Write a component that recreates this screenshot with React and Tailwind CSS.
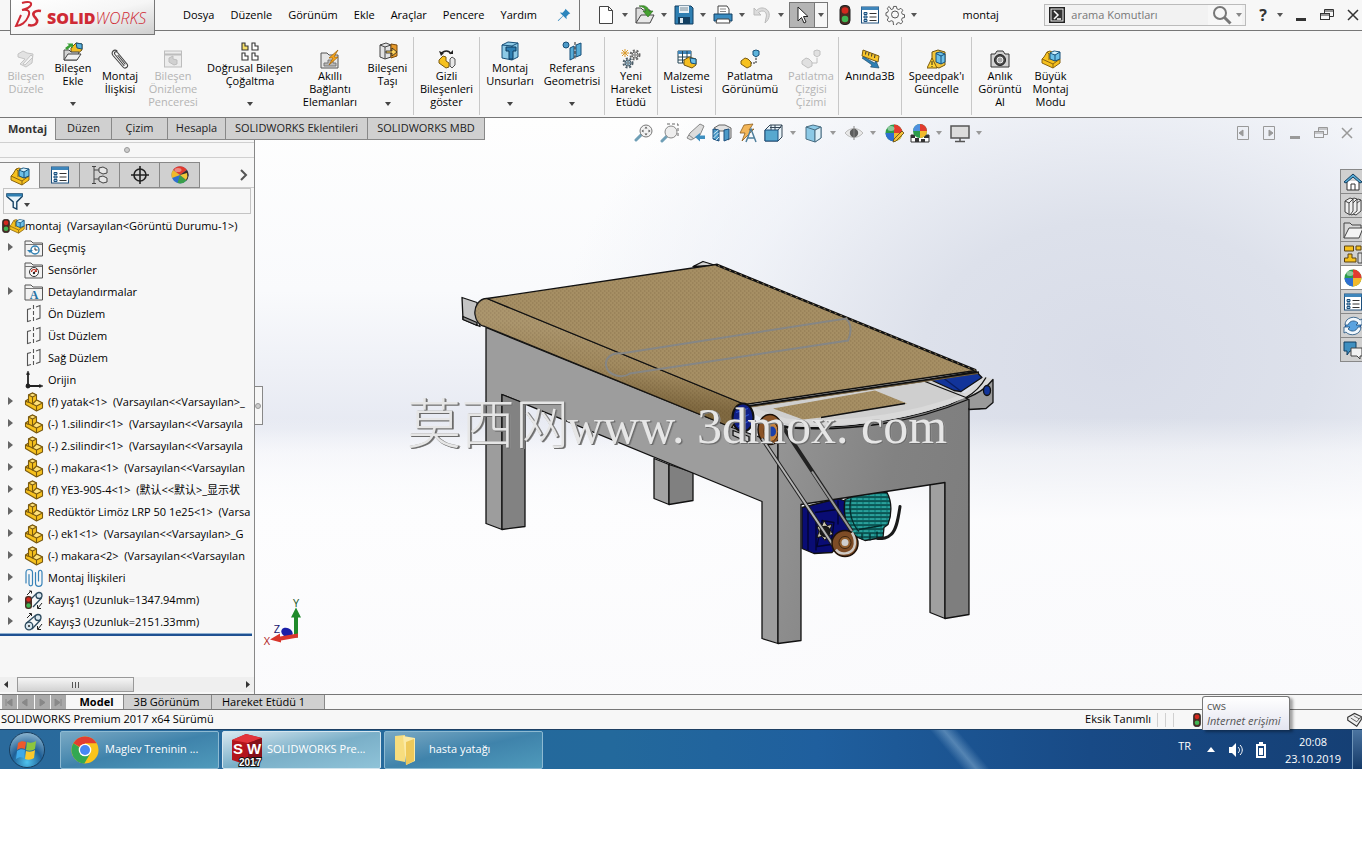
import { useState } from 'react';

/* ---------- shared drawing helpers ---------- */

function Glyph({ size = 20, children, className = '' }) {
  return (
    <svg
      width={size}
      height={size}
      viewBox="0 0 20 20"
      fill="none"
      className={`shrink-0 ${className}`}
      aria-hidden="true"
    >
      {children}
    </svg>
  );
}

function Caret({ className = 'text-[#555]' }) {
  return (
    <svg width="6" height="4" viewBox="0 0 6 4" className={`shrink-0 ${className}`} aria-hidden="true">
      <path d="M0 0h6L3 4z" fill="currentColor" />
    </svg>
  );
}

/* Yellow L-shaped part */
const Part = () => (
  <g stroke="#7a5a10" strokeWidth="1.100" strokeLinejoin="round">
    <path d="M1.500 9l3-2V3l4-2 4 2v5l6 3v5l-6 3-11-6.500z" fill="#f6c11e" />
    <path d="M4.500 3l4 2 4-2-4-2z" fill="#ffe27a" />
    <path d="M12.500 8l6 3-6 3-4-2z" fill="#ffe27a" />
    <path d="M8.500 5v7l-4-2V7M1.500 9l3 1.500M12.500 14v5" fill="none" />
  </g>
);

/* Part with a blue cube standing on it */
const Assembly = () => (
  <g strokeLinejoin="round">
    <path d="M1 10l2-2 3-5 3-1 2 1v7h8v4l-7 5-11-5z" fill="#f6c11e" stroke="#8a6410" />
    <path d="M1 10l11 5 7-5M12 15v4M6 3l2 2v6" stroke="#8a6410" />
    <path d="M9 4l4-2 6 1v7l-5 2-5-2z" fill="#6cc0e8" stroke="#174f78" />
    <path d="M9 4l5 2 5-3M14 6v6" stroke="#174f78" />
    <path d="M10 4l3.500-1.500 4 .7-3.500 2z" fill="#d9f1fb" />
  </g>
);

const Balloon = () => (
  <g>
    <circle cx="10" cy="10" r="8.500" fill="#2c9c4b" />
    <path d="M10 10V1.500A8.500 8.500 0 0 1 18.500 10z" fill="#e23b2e" />
    <path d="M10 10h8.500A8.500 8.500 0 0 1 10 18.500z" fill="#f1b92b" />
    <path d="M10 10v8.500A8.500 8.500 0 0 1 1.500 10z" fill="#2e6fd1" />
    <ellipse cx="7" cy="5.500" rx="3.500" ry="2.500" fill="#fff" opacity=".45" />
  </g>
);

/* Sphere used on the manager tab, split on a slant */
const Sphere = () => (
  <g>
    <circle cx="10" cy="10" r="8.500" fill="#2e6fd1" />
    <path d="M10 10L3 5a8.500 8.500 0 0 1 14 0z" fill="#e23b2e" />
    <path d="M10 10l7-5a8.500 8.500 0 0 1-1 11z" fill="#3a2a2a" />
    <path d="M10 10l6.500 5.500a8.500 8.500 0 0 1-9 2.500z" fill="#3a9f4a" />
    <path d="M10 10L3 5a8.500 8.500 0 0 0-1 8z" fill="#f1b92b" />
    <path d="M10 10l7-2a8 8 0 0 1-1 7z" fill="#f1c93b" />
    <ellipse cx="8" cy="5" rx="3.500" ry="2" fill="#fff" opacity=".4" />
  </g>
);

const List = () => (
  <g>
    <rect x="1.500" y="2" width="17" height="16" fill="#fff" stroke="#1d4f7c" />
    <rect x="1.500" y="2" width="17" height="3" fill="#3f86bb" />
    <path d="M4 7.500h3v2H4zM4 11h3v2H4zM4 14.500h3v2H4z" fill="#9fd0ea" stroke="#1d4f7c" />
    <path d="M9.500 8.500h7M9.500 12h7M9.500 15.500h7" stroke="#333" />
  </g>
);

const Light = () => (
  <g>
    <rect x="5" y="0.500" width="10" height="19" rx="4" fill="#4a2c22" stroke="#222" />
    <circle cx="10" cy="5.500" r="3.300" fill="#d4281e" />
    <circle cx="10" cy="14" r="3.300" fill="#3fb552" />
  </g>
);

const Gear = ({ x = 10, y = 10, r = 5, c = '#555', f = '#e9e9e9' }) => (
  <g stroke={c}>
    <circle cx={x} cy={y} r={r + 1.500} strokeWidth="2" strokeDasharray="2 1.700" />
    <circle cx={x} cy={y} r={r} fill={f} />
    <circle cx={x} cy={y} r={r / 2.500} fill="#fff" />
  </g>
);

const icons = {
  pin: <path d="M12 1l7 7-2 .6-3.500 3.500.3 4L9 11.500 2 18.500l-1-.5L8.500 11 4 6.500l4 .4L11.500 3z" fill="#2d86bd" />,
  newDoc: <path d="M3.500 1.500h9l4 4v13h-13zM12.500 1.500v4h4" fill="#fff" stroke="#444" />,
  open: (
    <g>
      <path d="M1 18V3h5l2 2h7v4" fill="#ddd" stroke="#444" />
      <path d="M1 18l5-8h13l-4 8z" fill="#e8e8e8" stroke="#444" />
      <path d="M4 1c5-1 9 0 10 5h4l-5 6-5-6h3c-1-3-3-4-7-5z" fill="#44a02f" stroke="#2a6c1c" strokeWidth=".6" />
    </g>
  ),
  save: (
    <g>
      <path d="M1 1h16l2 2v16H1z" fill="#2f7fb2" stroke="#123f61" />
      <path d="M5 1h10v7H5z" fill="#e9f1f6" />
      <path d="M6 3h8M6 5h8" stroke="#7b8d98" />
      <path d="M4 12h12v7H4z" fill="#123f61" />
      <path d="M6 13h3v5H6z" fill="#dce8ef" />
    </g>
  ),
  print: (
    <g>
      <path d="M5 1h9l2 3v6H5z" fill="#fff" stroke="#444" />
      <path d="M1 9h18v7H1z" fill="#3a8cc0" stroke="#123f61" />
      <path d="M4 14h12l1 4H3z" fill="#fff" stroke="#444" />
      <path d="M7 4h6M7 6.500h6" stroke="#888" />
    </g>
  ),
  undo: <path d="M2 3v7h7L6.500 7.500C11 4 16 7 14 13l-1 5c5-4 6-11 1-14-4-2-7-1-9.500 1.500z" fill="#dcdcdc" stroke="#bbb" />,
  pointer: <path d="M6 2v14l3.500-3.500L12 18l2-1-2.500-5.500H16z" fill="#fff" stroke="#222" />,
  light: <Light />,
  list: <List />,
  gear: (
    <g stroke="#555" fill="#f8f8f8">
      <path
        d="M8.500 1.500h3l.5 2.500 2 .8 2.200-1.300 2 2-1.300 2.200.8 2 2.300.5v3l-2.300.4-.8 2 1.300 2.200-2 2-2.200-1.300-2 .8-.5 2.200h-3L8 17.300l-2-.8-2.200 1.300-2-2 1.300-2.200-.8-2L0.500 11.200v-3l1.800-.5.8-2-1.300-2.200 2-2L6 4.800l2-.8z"
        transform="translate(.5 0) scale(.95)"
      />
      <circle cx="10" cy="9.500" r="3.500" />
    </g>
  ),
  editPart: (
    <g stroke="#c4c4c4" fill="#e2e2e2">
      <path d="M2 5l5-3 4 2 6 1-1 9-6 4-6-3 5-5-7-2z" />
      <path d="M7 15l8-9 2 2-8 8z" fill="#f4f4f4" />
    </g>
  ),
  insertPart: (
    <g>
      <path d="M8 7l5-5 6 1v6l-5 4-6-2z" fill="#f2bd24" stroke="#6f5410" />
      <path d="M13 2l6 1v5l-5-1z" fill="#5db4dd" stroke="#174f78" />
      <path d="M1 19V9h5l2 2h8l-2 8z" fill="#d4d4d4" stroke="#444" />
      <path d="M1 19l4-6h13l-4 6z" fill="#f0f0f0" stroke="#444" />
      <path d="M2 7l4-3-2-1.500h6V7L8 5.500 4 9z" fill="#3a9f35" />
    </g>
  ),
  clip: (
    <path
      d="M14 16.500L5 5.500C3.500 3.500 6 1.500 7.500 3.500L17 15c2 3-2 5.500-4 3L3 6.500C0.500 3 4.500-.5 7 2M8 6.500l7 8.500"
      stroke="#444"
      strokeWidth="1.100"
      strokeLinecap="round"
    />
  ),
  preview: (
    <g stroke="#bdbdbd">
      <rect x="1.500" y="2" width="17" height="16" fill="#ececec" />
      <path d="M1.500 5.500h17" strokeWidth="2" />
      <path d="M6 9l4-2v3l4 1v4l-3 1-5-3z" fill="#d0d0d0" />
    </g>
  ),
  pattern: (
    <g stroke="#333" strokeWidth="1.100">
      <path d="M2 2h3v3h3v4H2z" fill="#f6df6a" />
      <path d="M12 2h3v3h3v4h-6zM2 12h3v3h3v4H2zM12 12h3v3h3v4h-6z" fill="#fff" />
    </g>
  ),
  smart: (
    <g>
      <path d="M1 19V4h6l2 2h9v13z" fill="#e6e6e6" stroke="#555" />
      <path d="M4 14h4v-3h5v3h3v3H4z" fill="#b9b9b9" stroke="#777" />
      <path d="M18 1l-9 8h4l-4 7 9-8h-4z" fill="#f7a71c" stroke="#9e5f06" strokeWidth=".7" />
    </g>
  ),
  move: (
    <g>
      <path d="M2 4l6-2 5 2v12l-6 2-5-2z" fill="#e2e2e2" stroke="#444" />
      <path d="M2 4l5 2v12M7 6l6-2" stroke="#444" />
      <path d="M13 3l6 1v11l-6 2z" fill="#e79a2a" stroke="#7a4a0c" />
      <path d="M8 10h6V7l5 4-5 4v-3H8z" fill="#ffd25b" stroke="#222" strokeWidth=".8" />
    </g>
  ),
  hidden: (
    <g>
      <path d="M4 5c3-4 8-4 10 0" stroke="#222" strokeWidth="1.300" />
      <path d="M12 5h4V1zM2 2l2 5 3-3z" fill="#222" />
      <path d="M2 11l4-4 3 1v4l3 2v4l-3 1-7-5z" fill="#f6c11e" stroke="#7a5a10" />
      <path d="M13 10l2-2 3 2v6l-3 3-2-2z" fill="#e8e8e8" stroke="#555" />
    </g>
  ),
  features: (
    <g>
      <path d="M2 4l6-3 10 1v14l-6 3-10-2z" fill="#8cc9e6" stroke="#174f78" />
      <path d="M2 4l10 1v14M12 5l6-3" stroke="#174f78" />
      <path d="M6 6h10v4h-3v8H9v-8H6z" fill="#2f7fb2" stroke="#0d3c60" />
    </g>
  ),
  refGeom: (
    <g>
      <circle cx="4" cy="4" r="3" fill="#4c9ac8" stroke="#174f78" />
      <path d="M8 7l4-2v12l-4 2zM14 4l5-2v12l-5 2z" fill="#58acd6" stroke="#174f78" />
      <path d="M13 1v18" stroke="#222" strokeDasharray="3 1.500" />
    </g>
  ),
  motion: (
    <g>
      <path d="M4 0v8M0 4h8M1 1l6 6M7 1L1 7" stroke="#d9992a" />
      <Gear x={14} y={6} r={3} c="#666" />
      <Gear x={7} y={14} r={3} c="#4c5d68" f="#9ec3d6" />
    </g>
  ),
  bom: (
    <g>
      <path d="M1 2h13v12H1z" fill="#fff" stroke="#245" />
      <path d="M1 2h13v3H1z" fill="#3f86bb" />
      <path d="M1 8h13M1 11h13M5.500 2v12M10 2v12" stroke="#245" />
      <path d="M7 11l5-3 7 2v6l-4 3-8-3z" fill="#f4bd20" stroke="#6f5410" />
      <path d="M13 9l6 1v5l-5-1z" fill="#6cc0e8" stroke="#174f78" />
    </g>
  ),
  explode: (
    <g>
      <path d="M1 12l4-3 3 1 3 3v4l-4 2-6-4z" fill="#f6c11e" stroke="#7a5a10" />
      <path d="M13 2l3-1 3 1v4l-3 2-3-2z" fill="#5db4dd" stroke="#174f78" />
      <path d="M16 9v5h-5" stroke="#222" strokeDasharray="2 1" />
    </g>
  ),
  explodeOff: (
    <g fill="#e0e0e0" stroke="#c0c0c0">
      <path d="M1 12l4-3 3 1 3 3v4l-4 2-6-4zM13 2l3-1 3 1v4l-3 2-3-2z" />
      <path d="M16 9v5h-5" fill="none" />
    </g>
  ),
  instant: (
    <g>
      <path d="M3 1l16 6-1 6L2 7z" fill="#f7c52b" stroke="#7a5a10" />
      <path d="M6 2.500l-.5 3M9 3.500l-.5 3M12 4.500l-.5 3M15 6l-.5 3" stroke="#333" />
      <path d="M2 9l10 7-1.500 2 8.500 1-3-7-1.500 2L4 8z" fill="#2f7fb2" stroke="#123f61" strokeWidth=".6" />
    </g>
  ),
  speedpak: (
    <g>
      <path d="M5 3l6-2 7 2v13l-6 3-7-2z" fill="#f4c63a" stroke="#6f5410" />
      <path d="M9 4l4-1 5 2v8l-4 2-5-2z" fill="#6cc0e8" stroke="#174f78" />
      <path d="M14 7v8M9 4.500l5 2.500 4-2" stroke="#174f78" />
      <path d="M5 9l5 10H0z" fill="#ffd534" stroke="#7a5a10" />
      <path d="M5 12v4M5 17v1" stroke="#222" />
    </g>
  ),
  camera: (
    <g>
      <path d="M1 5h4l2-3h6l2 3h4v13H1z" fill="#d2d2d2" stroke="#333" />
      <circle cx="10" cy="11" r="5.500" fill="#4a4a4a" stroke="#222" />
      <circle cx="10" cy="11" r="3" fill="#a8a8a8" stroke="#eee" />
    </g>
  ),
  assembly: <Assembly />,
  part: <Part />,
  balloon: <Balloon />,
  sphere: <Sphere />,
  tree: (
    <g stroke="#444" fill="#fff">
      <path d="M4 2v16M4 5h5M4 14h5" />
      <path d="M2 1.500h4M2 18.500h4" />
      <path d="M9 3l4-1 4 2v4l-4 1-4-2zM9 12l4-1 4 2v4l-4 1-4-2z" fill="#e6e6e6" />
    </g>
  ),
  target: (
    <g stroke="#222" strokeWidth="1.600">
      <circle cx="10" cy="10" r="6" />
      <path d="M10 1v18M1 10h18" />
    </g>
  ),
  folderHistory: (
    <g>
      <path d="M1 18V3h6l2 2h9.500v13z" fill="#f2f2f2" stroke="#555" />
      <path d="M1 6.500h17" stroke="#777" />
      <circle cx="11" cy="12" r="4" fill="#fff" stroke="#2f7fb2" strokeWidth="1.400" />
      <path d="M11 9.500V12h2.500" stroke="#333" />
      <path d="M3 12h6l-3 3z" fill="#2f7fb2" />
    </g>
  ),
  folderSensor: (
    <g>
      <path d="M1 18V3h6l2 2h9.500v13z" fill="#f2f2f2" stroke="#555" />
      <path d="M1 6.500h17" stroke="#777" />
      <circle cx="10" cy="12" r="4.500" fill="#fff" stroke="#333" />
      <path d="M7.500 12a2.500 2.500 0 0 1 5 0M10 13l3-4" stroke="#c0392b" strokeWidth="1.200" />
      <circle cx="10" cy="13" r="1.200" fill="#222" />
    </g>
  ),
  folderNotes: (
    <g>
      <path d="M1 18V3h6l2 2h9.500v13z" fill="#f2f2f2" stroke="#555" />
      <path d="M1 6.500h17" stroke="#777" />
      <text x="10" y="17" textAnchor="middle" fontSize="12" fontWeight="700" fontFamily="Liberation Serif, serif" fill="#2470a4">
        A
      </text>
    </g>
  ),
  plane: (
    <g stroke="#555" strokeWidth="1.100">
      <path d="M7 4.500L3.500 5.500v12L7 16.500M12 3l4-1.500v12.500L12 15.500" />
      <path d="M9.500 1v18" strokeDasharray="4 2" />
    </g>
  ),
  origin: (
    <g stroke="#222" strokeWidth="1.800" fill="#222">
      <path d="M4 3v13h13" fill="none" />
      <path d="M4 1L2.500 4.500h3zM19 16l-3.500-1.500v3z" strokeWidth=".6" />
      <circle cx="4" cy="16" r="1.500" />
    </g>
  ),
  mates: (
    <g stroke="#3682b8" strokeWidth="1.200" strokeLinecap="round">
      <path d="M2 15V4.500c0-4 6.500-4 6.500 0V16c0 2.500-3.500 2.500-3.500 0V6.500" />
      <path d="M11.500 4.500V15c0 4.500 6.500 4.500 6.500 0V4.500c0-3-3.500-3-3.500 0V13" />
    </g>
  ),
  belt: (
    <g>
      <circle cx="5" cy="14" r="3.800" fill="#d8e6ee" stroke="#2c4a5e" strokeWidth="1.300" />
      <circle cx="14" cy="5.500" r="3" fill="#d8e6ee" stroke="#2c4a5e" strokeWidth="1.300" />
      <path d="M2 11.500L12 3M8 17l8.500-9" stroke="#2c4a5e" strokeWidth="1.300" />
      <circle cx="5" cy="14" r="1" fill="#222" />
      <path d="M3 6l4-4M5 1.500h2.500V4M18 12l-4 5M13.500 14v3.500H17" stroke="#222" />
    </g>
  ),
  beltRebuild: (
    <g>
      <circle cx="15" cy="5.500" r="3" fill="#d8e6ee" stroke="#2c4a5e" strokeWidth="1.300" />
      <path d="M7 9l6-6M9 17l8.500-9" stroke="#2c4a5e" strokeWidth="1.300" />
      <path d="M3 5l4-4M5 1h2.500v2.500M18 13l-4 5M13.500 15v3.500H17" stroke="#222" />
      <rect x="1" y="6" width="7" height="13" rx="3" fill="#4a2c22" />
      <circle cx="4.500" cy="9.500" r="2.200" fill="#d4281e" />
      <circle cx="4.500" cy="15.500" r="2.200" fill="#3fb552" />
    </g>
  ),
  zoomFit: (
    <g>
      <path d="M7 12l-5 5" stroke="#6f9fb6" strokeWidth="3" strokeLinecap="round" />
      <circle cx="12" cy="8" r="6" fill="#f2f2f2" stroke="#777" />
      <path d="M12 3.500l1.500 2h-3zM12 12.500l1.500-2h-3zM7.500 8l2-1.500v3zM16.500 8l-2-1.500v3z" fill="#555" />
    </g>
  ),
  zoomArea: (
    <g>
      <path d="M7 1h11v12" stroke="#666" strokeDasharray="3 2" />
      <path d="M7 13l-5 5" stroke="#6f9fb6" strokeWidth="3" strokeLinecap="round" />
      <circle cx="11" cy="9" r="6" fill="#eee" stroke="#888" />
    </g>
  ),
  prevView: (
    <g>
      <path d="M14 1l4 2-4 9-9 5-4-2 3-5z" fill="#dcdcdc" stroke="#888" />
      <path d="M3 12l5 4" stroke="#888" />
      <path d="M9 14l5-4v2.500h5v3.500h-5v2.500z" fill="#3f8fc0" />
    </g>
  ),
  section: (
    <g>
      <path d="M2 5l5-3h6l6 3v10l-3 2V8H7z" fill="#e2e2e2" stroke="#666" />
      <path d="M1 6l6 1v11l-6-2z" fill="#4c9ac8" stroke="#1d4f7c" />
      <path d="M1.500 11l5-4M1.500 15l5-5M4 17l3-3" stroke="#d6ecf7" />
      <path d="M12 7l5-1v10l-5 2z" fill="#4c9ac8" stroke="#1d4f7c" />
    </g>
  ),
  annot: (
    <g>
      <path d="M6 2l9-1-4 6 5-1L4 18l3-8H2z" fill="#f3b659" stroke="#8b5c1c" strokeWidth=".8" />
      <path d="M8 19l5-13 5 13M10 15h7" stroke="#4f7f9c" strokeWidth="1.500" />
    </g>
  ),
  orient: (
    <g>
      <path d="M1 7l5-5h12v12l-4 4H1z" fill="#e9f4fa" stroke="#345" />
      <path d="M1 7h13v11H1z" fill="#57a8cf" stroke="#1d4f7c" />
      <path d="M14 7l4-5M7 2v5M11 2v5M6 4.500h11" stroke="#345" />
    </g>
  ),
  cube: (
    <g strokeLinejoin="round">
      <path d="M2 4l7-2 8 2v11l-6 4-9-3z" fill="#8cc9e6" stroke="#4a6f84" />
      <path d="M2 4l9 3 6-3M11 7v12" stroke="#4a6f84" />
      <path d="M11 7l6-3v11l-6 4z" fill="#dff0f8" stroke="#4a6f84" />
    </g>
  ),
  eye: (
    <g>
      <path d="M1 10c5-6 13-6 18 0-5 6-13 6-18 0z" fill="#e8e8e8" stroke="#bbb" />
      <circle cx="10" cy="10" r="4.200" fill="#5c5c5c" />
      <path d="M10 3v14" stroke="#888" />
    </g>
  ),
  appearance: (
    <g>
      <Balloon />
      <path d="M18 8l2 2-8 8-3 1 1-3z" fill="#f3c23c" stroke="#5b4212" strokeWidth=".8" />
    </g>
  ),
  scene: (
    <g>
      <path d="M1 12h18v7H1z" fill="#fff" stroke="#333" />
      <path d="M1 12h4v3H1zM5 15h4v4H5zM14 12h5v3h-5zM11 16h4v3h-4z" fill="#333" />
      <circle cx="10" cy="8" r="7" fill="#2c9c4b" />
      <path d="M10 8V1a7 7 0 0 1 7 7z" fill="#e23b2e" />
      <path d="M10 8h7a7 7 0 0 1-7 7z" fill="#f1b92b" />
      <path d="M10 8V1a7 7 0 0 0-7 7z" fill="#4d8fe0" />
    </g>
  ),
  monitor: (
    <g>
      <rect x="1" y="3" width="18" height="12" fill="#dcdcdc" stroke="#555" strokeWidth="1.500" />
      <path d="M10 15v3M5 18.500h10" stroke="#555" strokeWidth="1.500" />
    </g>
  ),
  home: (
    <g>
      <path d="M4 9v9h12V9" fill="#fff" stroke="#333" />
      <path d="M1 10l9-8 9 8-2 1-7-6-7 6z" fill="#58acd6" stroke="#123f61" />
      <path d="M8 18v-6h4v6" stroke="#333" />
    </g>
  ),
  library: (
    <g fill="#efefef" stroke="#444" strokeLinejoin="round">
      <path d="M10 6l5-3 3 1v11l-5 4-3-1z" />
      <path d="M6 5l5-3 3 1v12l-5 4-3-1z" />
      <path d="M2 5l5-3 3 1v12l-3 4-5-3z" />
      <path d="M2 5l4 2 4-4M6 7v11M10 7l4-4M14 7l4-3" fill="none" />
    </g>
  ),
  folder: (
    <g stroke="#444">
      <path d="M1 18V3h6l2 2h9v4" fill="#d8d8d8" />
      <path d="M1 18l5-10h14l-4 10z" fill="#f4f4f4" />
    </g>
  ),
  palette: (
    <g stroke="#5b4212" fill="#f6c11e">
      <path d="M1.500 2h9v5h-9zM13 2h5v4h-5zM5 10h4v4h4v4H1.500v-4H5z" />
      <path d="M15 9h4v10h-4z" fill="#ddd" stroke="#444" />
    </g>
  ),
  refresh: (
    <g>
      <circle cx="10" cy="10" r="7.500" fill="#5aa3e0" stroke="#1d4f9c" />
      <path d="M2 9c0-8 11-10 15-5l2-1v6h-6l2-2c-3-3-8-3-10 2zM18 11c0 8-11 10-15 5l-2 1v-6h6l-2 2c3 3 8 3 10-2z" fill="#f2f8fd" stroke="#1d4f7c" strokeWidth=".8" />
    </g>
  ),
  forum: (
    <g>
      <path d="M1 2h12v9H7l-3 4v-4H1z" fill="#3f8fc0" stroke="#123f61" />
      <path d="M8 8h11v8h-2v3l-3-3H8z" fill="#f2f2f2" stroke="#444" />
    </g>
  ),
};

/* ---------- data ---------- */

const menus = ['Dosya', 'Düzenle', 'Görünüm', 'Ekle', 'Araçlar', 'Pencere', 'Yardım'];

const ribbon = [
  { w: 'w-[48px]', icon: 'editPart', lines: ['Bileşen', 'Düzele'], off: true },
  { w: 'w-[46px]', icon: 'insertPart', lines: ['Bileşen', 'Ekle'], drop: true },
  { w: 'w-[48px]', icon: 'clip', lines: ['Montaj', 'İlişkisi'] },
  { w: 'w-[58px]', icon: 'preview', lines: ['Bileşen', 'Önizleme', 'Penceresi'], off: true },
  { w: 'w-[96px]', icon: 'pattern', lines: ['Doğrusal Bileşen', 'Çoğaltma'], drop: true },
  { w: 'w-[64px]', icon: 'smart', lines: ['Akıllı', 'Bağlantı', 'Elemanları'] },
  { w: 'w-[52px]', icon: 'move', lines: ['Bileşeni', 'Taşı'], drop: true, sep: true },
  { w: 'w-[66px]', icon: 'hidden', lines: ['Gizli', 'Bileşenleri', 'göster'], sep: true },
  { w: 'w-[60px]', icon: 'features', lines: ['Montaj', 'Unsurları'], drop: true },
  { w: 'w-[65px]', icon: 'refGeom', lines: ['Referans', 'Geometrisi'], drop: true, sep: true },
  { w: 'w-[53px]', icon: 'motion', lines: ['Yeni', 'Hareket', 'Etüdü'], sep: true },
  { w: 'w-[58px]', icon: 'bom', lines: ['Malzeme', 'Listesi'], sep: true },
  { w: 'w-[68px]', icon: 'explode', lines: ['Patlatma', 'Görünümü'] },
  { w: 'w-[55px]', icon: 'explodeOff', lines: ['Patlatma', 'Çizgisi', 'Çizimi'], off: true, sep: true },
  { w: 'w-[63px]', icon: 'instant', lines: ['Anında3B'], sep: true },
  { w: 'w-[70px]', icon: 'speedpak', lines: ["Speedpak'ı", 'Güncelle'], sep: true },
  { w: 'w-[56px]', icon: 'camera', lines: ['Anlık', 'Görüntü', 'Al'] },
  { w: 'w-[45px]', icon: 'assembly', lines: ['Büyük', 'Montaj', 'Modu'] },
];

const commandTabs = [
  { label: 'Montaj', w: 'w-[55px]' },
  { label: 'Düzen', w: 'w-[56px]' },
  { label: 'Çizim', w: 'w-[56px]' },
  { label: 'Hesapla', w: 'w-[58px]' },
  { label: 'SOLIDWORKS Eklentileri', w: 'w-[142px]' },
  { label: 'SOLIDWORKS MBD', w: 'w-[118px]' },
];

const headsUp = [
  { icon: 'zoomFit', label: 'Sığdır' },
  { icon: 'zoomArea', label: 'Alana yakınlaş' },
  { icon: 'prevView', label: 'Önceki görünüm' },
  { icon: 'section', label: 'Kesit görünümü' },
  { icon: 'annot', label: 'Dinamik notlar' },
  { icon: 'orient', label: 'Görünüm yönü', drop: true },
  { icon: 'cube', label: 'Görüntü stili', drop: true },
  { icon: 'eye', label: 'Gizle/göster', drop: true },
  { icon: 'appearance', label: 'Görünüş' },
  { icon: 'scene', label: 'Sahne', drop: true },
  { icon: 'monitor', label: 'Görünüm ayarları', drop: true },
];

const managerTabs = ['assembly', 'list', 'tree', 'target', 'sphere'];

const treeRows = [
  { icon: 'folderHistory', text: 'Geçmiş', open: true },
  { icon: 'folderSensor', text: 'Sensörler' },
  { icon: 'folderNotes', text: 'Detaylandırmalar', open: true },
  { icon: 'plane', text: 'Ön Düzlem' },
  { icon: 'plane', text: 'Üst Düzlem' },
  { icon: 'plane', text: 'Sağ Düzlem' },
  { icon: 'origin', text: 'Orijin' },
  { icon: 'part', text: '(f) yatak<1>  (Varsayılan<<Varsayılan>_', open: true },
  { icon: 'part', text: '(-) 1.silindir<1>  (Varsayılan<<Varsayıla', open: true },
  { icon: 'part', text: '(-) 2.silindir<1>  (Varsayılan<<Varsayıla', open: true },
  { icon: 'part', text: '(-) makara<1>  (Varsayılan<<Varsayılan', open: true },
  { icon: 'part', text: '(f) YE3-90S-4<1>  (默认<<默认>_显示状', open: true },
  { icon: 'part', text: 'Redüktör Limöz LRP 50 1e25<1>  (Varsa', open: true },
  { icon: 'part', text: '(-) ek1<1>  (Varsayılan<<Varsayılan>_G', open: true },
  { icon: 'part', text: '(-) makara<2>  (Varsayılan<<Varsayılan', open: true },
  { icon: 'mates', text: 'Montaj İlişkileri', open: true },
  { icon: 'beltRebuild', text: 'Kayış1 (Uzunluk=1347.94mm)', open: true },
  { icon: 'belt', text: 'Kayış3 (Uzunluk=2151.33mm)', open: true },
];

const taskPane = ['home', 'library', 'folder', 'palette', 'balloon', 'list', 'refresh', 'forum'];

/* ---------- title bar and ribbon ---------- */

function Logo() {
  return (
    <div className="relative z-10 h-[35px] w-[145px] shrink-0 self-start border border-t-0 border-[#777] bg-gradient-to-br from-white via-[#f6f6f6] to-[#cfcfcf]">
      <svg viewBox="0 0 143 34" className="block h-full w-full" role="img" aria-label="SOLIDWORKS">
        <g fill="none" stroke="#cf2a35" strokeWidth="2">
          <path d="M11 3c6-2 10-1 9 2-1 2-5 4-9 5 6-1 9 1 6 7-2 5-7 9-12 9l5-11" />
          <path d="M30 11c-6-1-9 2-7 5 1 2 4 3 3 6-1 3-5 4-9 3" strokeWidth="2.600" />
        </g>
        <text x="36" y="24" fontFamily="Open Sans, sans-serif" fontSize="16" fill="#cf2a35">
          <tspan fontWeight="800">SOLID</tspan>
          <tspan fontStyle="italic" fontWeight="300">WORKS</tspan>
        </text>
      </svg>
    </div>
  );
}

function WindowButtons({ className = 'text-[#333]' }) {
  return (
    <div className={`flex items-center gap-[10px] ${className}`}>
      <button aria-label="Simge durumuna küçült" className="block">
        <svg width="16" height="16" viewBox="0 0 16 16"><path d="M3 11h10v3H3z" fill="currentColor" /></svg>
      </button>
      <button aria-label="Önceki boyut" className="block">
        <svg width="16" height="16" viewBox="0 0 16 16" fill="none" stroke="currentColor">
          <path d="M5.500 6V2.500h9v7H11M5.500 4h9" />
          <rect x="1.500" y="6.500" width="9" height="6" />
          <path d="M1.500 8h9" />
        </svg>
      </button>
      <button aria-label="Kapat" className="block">
        <svg width="16" height="16" viewBox="0 0 16 16" fill="none" stroke="currentColor" strokeWidth="1.500"><path d="M3 3l10 10M13 3L3 13" /></svg>
      </button>
    </div>
  );
}

function ToolButton({ icon, label, drop, w }) {
  return (
    <button aria-label={label} className={`flex h-[24px] shrink-0 items-center justify-between ${w}`}>
      <Glyph size={20}>{icons[icon]}</Glyph>
      {drop && <Caret />}
    </button>
  );
}

function TitleBar() {
  return (
    <header className="flex h-[31px] items-center border-b border-[#777] bg-[#f7f7f7]">
      <div className="flex h-full w-[580px] shrink-0 items-center border-r border-[#777] pl-[10px]">
        <Logo />
        <nav className="ml-[28px] flex gap-4 text-[11px]">
          {menus.map((m) => (
            <button key={m} className="whitespace-nowrap">{m}</button>
          ))}
        </nav>
        <button aria-label="Menüyü sabitle" className="ml-[20px]">
          <Glyph size={14}>{icons.pin}</Glyph>
        </button>
      </div>
      <div className="flex shrink-0 items-center gap-[7px] pl-[16px]">
        <ToolButton icon="newDoc" label="Yeni" w="w-[32px]" drop />
        <ToolButton icon="open" label="Aç" w="w-[32px]" drop />
        <ToolButton icon="save" label="Kaydet" w="w-[32px]" drop />
        <ToolButton icon="print" label="Yazdır" w="w-[32px]" drop />
        <ToolButton icon="undo" label="Geri al" w="w-[32px]" drop />
      </div>
      <div className="flex shrink-0 items-center gap-[7px] pl-[5px]">
        <button aria-label="Seç" className="flex h-[26px] w-[39px] items-center border border-[#777]">
          <span className="flex h-full w-[25px] items-center justify-center border-r border-[#777] bg-[#b4b4b4]">
            <Glyph size={20}>{icons.pointer}</Glyph>
          </span>
          <span className="flex flex-1 justify-center"><Caret /></span>
        </button>
        <ToolButton icon="light" label="Yeniden oluştur" w="w-[18px]" />
        <ToolButton icon="list" label="Dosya özellikleri" w="w-[18px]" />
        <ToolButton icon="gear" label="Seçenekler" w="w-[32px]" drop />
      </div>
      <div className="flex flex-1 justify-center text-[11px]">montaj</div>
      <div className="flex h-[22px] w-[202px] shrink-0 items-center border border-[#bbb] bg-[#f2f2f2] px-[3px]">
        <svg width="18" height="18" viewBox="0 0 18 18" className="shrink-0" aria-hidden="true">
          <rect x="1" y="1" width="16" height="16" fill="#222" />
          <rect x="3" y="3" width="12" height="12" fill="#333" stroke="#eee" />
          <path d="M6 5l4 4-4 4M9 13h4" stroke="#fff" fill="none" strokeWidth="1.500" />
        </svg>
        <input
          aria-label="arama Komutları"
          placeholder="arama Komutları"
          className="ml-[5px] w-full min-w-0 bg-transparent text-[11px] outline-none placeholder:text-[#777]"
        />
        <button aria-label="Ara" className="flex h-full items-center gap-1 bg-[#f7f7f7] pl-1">
          <svg width="20" height="20" viewBox="0 0 20 20" fill="none" stroke="#777" aria-hidden="true">
            <circle cx="8" cy="8" r="6" strokeWidth="2" />
            <path d="M12.500 12.500l6 6" strokeWidth="3" />
          </svg>
          <Caret className="text-[#888]" />
        </button>
      </div>
      <button className="ml-[13px] flex shrink-0 items-center gap-[10px] text-[16px] font-bold text-[#333]">
        ?<Caret />
      </button>
      <div className="ml-[10px] mr-[1px] shrink-0"><WindowButtons /></div>
    </header>
  );
}

function RibbonItem({ w, icon, lines, drop, off, sep }) {
  return (
    <button
      className={`flex h-[78px] shrink-0 flex-col items-center text-[11px] leading-[13px] ${w} ${
        drop ? 'pt-[4px]' : 'pt-[12px]'
      } ${off ? 'text-[#b4b4b4]' : 'text-black'} ${sep ? 'border-r border-[#c8c8c8]' : ''}`}
    >
      <Glyph size={20}>{icons[icon]}</Glyph>
      <span className="flex flex-col items-center">
        {lines.map((line) => (
          <span key={line} className="whitespace-nowrap">{line}</span>
        ))}
      </span>
      {drop && <span className="mt-auto pb-[9px]"><Caret className="text-[#444]" /></span>}
    </button>
  );
}

function Ribbon() {
  return (
    <div className="flex h-[87px] border-b border-[#777] bg-[#f7f7f7] pl-[2px] pt-[6px]">
      {ribbon.map((item) => (
        <RibbonItem key={item.icon + item.w} {...item} />
      ))}
    </div>
  );
}

function CommandTabs() {
  const [active, setActive] = useState('Montaj');
  return (
    <div className="flex shrink-0 self-start text-[11px]" role="tablist">
      {commandTabs.map(({ label, w }) => (
        <button
          key={label}
          role="tab"
          aria-selected={active === label}
          onClick={() => setActive(label)}
          className={`h-[22px] whitespace-nowrap text-center ${w} ${
            active === label
              ? 'bg-[#f7f7f7] font-bold text-[#333]'
              : 'border-b border-l border-[#888] bg-[#d0d0d0] text-[#222] last:border-r'
          }`}
        >
          {label}
        </button>
      ))}
    </div>
  );
}

/* ---------- feature manager ---------- */

function FeatureManager() {
  const [tab, setTab] = useState('assembly');
  return (
    <aside className="flex w-[255px] shrink-0 flex-col border-r border-[#888] bg-[#f7f7f7]">
      <div className="mt-[2px] flex h-[16px] items-center justify-center border-y border-[#d0d0d0]">
        <span className="h-[6px] w-[6px] rounded-full border border-[#999] bg-[#ccc]" />
      </div>
      <div className="mt-[4px] flex h-[26px] items-stretch">
        {managerTabs.map((t) => (
          <button
            key={t}
            aria-label={t}
            onClick={() => setTab(t)}
            className={`flex w-[40px] items-center justify-center border-r border-t border-[#888] ${
              tab === t ? 'bg-[#f7f7f7]' : 'border-b bg-[#d0d0d0]'
            }`}
          >
            <Glyph size={20}>{icons[t]}</Glyph>
          </button>
        ))}
        <button aria-label="Diğer sekmeler" className="flex flex-1 items-center justify-end border-b border-[#ccc] pr-[6px]">
          <svg width="8" height="12" viewBox="0 0 8 12" fill="none" stroke="#555" strokeWidth="2"><path d="M1 1l5 5-5 5" /></svg>
        </button>
      </div>
      <label className="mx-[3px] flex h-[26px] items-center border border-[#c4c4c4] pl-[2px]">
        <Glyph size={18}>
          <path d="M1 2h17v3l-6 6v8l-4-2v-6L1 5z" fill="#e8f4fa" stroke="#123f61" strokeWidth="1.500" />
          <path d="M1 2h17v3H1z" fill="#2f7fb2" />
        </Glyph>
        <Caret className="mt-2 text-[#444]" />
        <input aria-label="Ağacı filtrele" className="w-full min-w-0 bg-transparent text-[11px] outline-none" />
      </label>
      <div className="mr-[2px] mt-px overflow-hidden text-[11px]">
        <div className="flex h-[22px] items-center whitespace-pre">
          <Glyph size={14} className="-ml-px">{icons.light}</Glyph>
          <Glyph size={16} className="-ml-[4px]">{icons.assembly}</Glyph>
          <span>{'montaj  (Varsayılan<Görüntü Durumu-1>)'}</span>
        </div>
        <ul>
          {treeRows.map(({ icon, text, open }) => (
            <li key={text} className="flex h-[22px] items-center whitespace-pre">
              <span className="flex w-[24px] shrink-0 pb-[2px] pl-[8px]">
                {open && (
                  <svg width="5" height="8" viewBox="0 0 5 8" aria-hidden="true"><path d="M0 0l5 4-5 4z" fill="#666" /></svg>
                )}
              </span>
              <Glyph size={20}>{icons[icon]}</Glyph>
              <span className="pl-1">{text}</span>
            </li>
          ))}
        </ul>
        <div className="h-[3px] border-t border-[#8fb0d0] bg-[#1f5192]" />
      </div>
      <div className="mb-[2px] mt-[41px] flex h-[15px] items-center bg-[#efefef] px-[4px]">
        <svg width="5" height="7" viewBox="0 0 5 7" aria-hidden="true"><path d="M4 0v7L0 3.500z" fill="#333" /></svg>
        <div className="ml-[8px] flex h-full w-[117px] items-center justify-center gap-[2px] border border-[#999] bg-gradient-to-b from-[#f6f6f6] to-[#d2d2d2]">
          <span className="h-[6px] w-px bg-[#555]" />
          <span className="h-[6px] w-px bg-[#555]" />
          <span className="h-[6px] w-px bg-[#555]" />
        </div>
        <svg width="5" height="7" viewBox="0 0 5 7" className="ml-auto" aria-hidden="true"><path d="M1 0v7l4-3.500z" fill="#333" /></svg>
      </div>
    </aside>
  );
}

/* ---------- 3D view ---------- */

function Model() {
  return (
    <svg
      viewBox="255 140 1107 553"
      preserveAspectRatio="xMidYMid meet"
      className="absolute inset-0 h-full w-full"
      role="img"
      aria-label="Konveyör montajı"
    >
      <defs>
        <pattern id="weave" width="4" height="4" patternUnits="userSpaceOnUse">
          <rect width="4" height="4" fill="#a18a60" />
          <path d="M0 .5h2M2 2.500h2" stroke="#aa9368" />
          <path d="M2 .5h1M0 2.500h1" stroke="#927c54" />
        </pattern>
        <linearGradient id="rollShade" x1="0.560" y1="0.300" x2="0.440" y2="0.750">
          <stop offset="0" stopColor="#fff" stopOpacity="0.060" />
          <stop offset="0.500" stopColor="#3a2400" stopOpacity="0.050" />
          <stop offset="1" stopColor="#3a2400" stopOpacity="0.350" />
        </linearGradient>
        <linearGradient id="rightPanel" x1="0" y1="0" x2="1" y2="0.300">
          <stop offset="0" stopColor="#969696" />
          <stop offset="0.600" stopColor="#828282" />
          <stop offset="1" stopColor="#7e7e7e" />
        </linearGradient>
        <pattern id="fins" width="6" height="4" patternUnits="userSpaceOnUse">
          <rect width="6" height="4" fill="#168a86" />
          <path d="M0 .5h6" stroke="#052f30" strokeWidth="1.300" />
          <path d="M0 2.500h4" stroke="#48c4bb" strokeWidth=".8" />
        </pattern>
      </defs>

      <g stroke="#111" strokeWidth="1.300" strokeLinejoin="round">
        {/* back legs */}
        <path d="M654 458l15 6v40l-15-6z" fill="#a2a2a2" />
        <path d="M669 464l24 8v28l-24 4z" fill="#808080" />
        <path d="M930 482l15-2v138l-15-6z" fill="#a0a0a0" />

        {/* gearbox and motor */}
        <path d="M802 507l36-9 14 5v26l-20 23-18 1-12-5z" fill="#090c74" />
        <path d="M808 508v42M815 512l22-3M816 516v34M838 500v24M822 520l12 2-3 22-14 2z" stroke="#02042f" fill="none" />
        <path d="M824 520l3 5 5-1-2 5 3 5-5 1-3 5-3-4-5 1 2-6-2-5 5-1z" fill="#c9c3b0" strokeWidth="1" />
        <circle cx="825" cy="531" r="5" fill="#1a1a1a" />
        <path d="M845 499c14-6 29-9 42-7 5 9 5 22 1 32l-4 3-1 10-18 3-12-5c-8-10-10-25-8-36z" fill="url(#fins)" />
        <path d="M851 498c-3 12 1 26 8 33M859 529l23-4M862 533v6M870 533v7M877 531v8" stroke="#032c2c" fill="none" />
        <path d="M900 506c-2 14-4 24-9 28-4 4-8 4-13 4" stroke="#1a1a1a" strokeWidth="3" fill="none" strokeLinecap="round" />

        {/* left frame */}
        <path d="M486 327l246 100 46 16v200l-16-5V501L502 394v135l-16-6z" fill="#9d9d9d" />
        <path d="M502 394l23 9v123l-23 3z" fill="#828282" />

        {/* right frame */}
        <path d="M778 443V425c48 6 118-2 172-21l19-10 9-2 2 16h-11v206l-24 4V482l-144 22v136l-23 3z" fill="url(#rightPanel)" />
        <path d="M745 405l182-28 42 18c-40 20-110 34-180 31z" fill="#cfcfcf" stroke="none" />
        <path d="M765 420c70 12 144 0 201-23l18-8 9-10-8-3-21 17c-50 20-120 30-178 25l-36-12-6 1z" fill="#d9d9d9" stroke="none" />
        <path d="M784 427c66 5 130-5 184-28M925 381l41 16c9-5 16-13 20-20M966 397l3 2" fill="none" />
        <path d="M773 408l102-18 32 13-86 14-18 2z" fill="url(#weave)" stroke="none" />
        <path d="M821 417l84-14" fill="none" />
        <path d="M930 379l46-8 6 6-21 14-7-1z" fill="#12349a" />
        <path d="M944 378l16 12" stroke="#0a1d60" />
        <path d="M966 398c10-4 20-10 27-19v23l-7 6-17 1v-10z" fill="#9a9a9a" />
        <ellipse cx="987" cy="390" rx="3.500" ry="5" fill="#12349a" />

        {/* end brackets */}
        <path d="M462 297l15 5 3 24-17-7z" fill="#c4c4c4" />
        <path d="M463 316l14 6v3l-14-6z" fill="#8f8f8f" />
        <path d="M693 266l10-5 13 4z" fill="#d4d4d4" />

        {/* belt */}
        <path d="M487 298c-8 0-13 8-12 16 1 7 4 11 10 12l247 101 13-23z" fill="url(#weave)" />
        <path d="M487 298c-8 0-13 8-12 16 1 7 4 11 10 12l247 101 13-23z" fill="url(#rollShade)" stroke="none" />
        <path d="M487 298l229-34 260 106-231 34z" fill="url(#weave)" />
        <path d="M716 264l260 106" strokeWidth="2.500" />
        <path d="M718 265l258 105" stroke="#b59c6c" strokeWidth=".8" strokeDasharray="2 4" />
        <path d="M747 406l232-34" strokeWidth="2.500" />
        <path d="M748 407l230-34" stroke="#8c7248" strokeWidth=".8" />
        <ellipse cx="743" cy="417" rx="10.500" ry="14" fill="#101f86" strokeWidth="2" />
        <path d="M736 412l12-4M736 420l13-6M738 426l10-5" stroke="#2c4fd0" />
        <path d="M733 430l16 6v6l-16-7z" fill="#c9c9c9" />
      </g>

      {/* sketch slot */}
      <path
        d="M621 353l225-35c6 6 5 15 2 22L630 373c-7 5-22 3-24-8-1-8 6-13 15-12z"
        fill="none"
        stroke="#858685"
        strokeWidth="2"
      />

      {/* pulleys with drive belt */}
      <ellipse cx="770" cy="429" rx="12" ry="15" fill="#8b5427" stroke="#1a1008" strokeWidth="1.500" />
      <ellipse cx="771" cy="431" rx="7" ry="10" fill="#c8843e" stroke="#3b2410" />
      <ellipse cx="772" cy="431" rx="4" ry="5" fill="#1c3fa8" />
      <path d="M762 438l72 108M784 428l68 103" stroke="#222" strokeWidth="4" />
      <path d="M762 438l72 108" stroke="#b5b5b5" strokeWidth="2" />
      <path d="M812 471l40 60" stroke="#9a9a9a" strokeWidth="2" />
      <circle cx="845" cy="543" r="13" fill="#7d4c26" stroke="#1d1108" strokeWidth="1.500" />
      <path d="M836 549c4 6 15 5 18-2 2-5 1-10-2-15" fill="none" stroke="#cfcac4" strokeWidth="2.500" />
      <circle cx="845" cy="542" r="6" fill="#93602f" stroke="#3b2410" />
      <circle cx="845" cy="542" r="3.500" fill="#cfcfcf" />

      {/* watermark */}
      <g fill="#e6e6e6" className="[filter:drop-shadow(1px_1px_0_#6b6b6b)_drop-shadow(1px_0_0_#8a8a8a)]">
        <text x="407" y="443" fontSize="54" fontFamily="Noto Sans CJK SC, sans-serif" fontWeight="300">莫西网</text>
        <text x="567" y="442" fontSize="50" fontFamily="Liberation Serif, serif">www. 3dmox. com</text>
      </g>

      {/* axis triad */}
      <g fontFamily="Open Sans, sans-serif" fontSize="11" textAnchor="middle">
        <path d="M294 637v-20h-3l5-10 5 10h-3v20z" fill="#1f8a2a" />
        <ellipse cx="287" cy="632" rx="6" ry="4.500" fill="#1a1fa8" transform="rotate(25 287 632)" />
        <path d="M298 633v4l-17 3v2l-11-3 10-6v3z" fill="#d8362c" />
        <text x="296" y="606" fill="#14551c">Y</text>
        <text x="277" y="632" fill="#16166e">Z</text>
        <text x="267" y="644" fill="#b11c1c">X</text>
      </g>
    </svg>
  );
}

function DocControls() {
  return (
    <div className="flex items-center gap-[10px] pr-[7px] text-[#999]">
      <button aria-label="Sol bölme">
        <svg width="16" height="16" viewBox="0 0 16 16" fill="none" stroke="currentColor"><path d="M2.500 1.500h11v13h-11z" /><path d="M8 5v6L4 8z" fill="currentColor" /></svg>
      </button>
      <button aria-label="Sağ bölme">
        <svg width="16" height="16" viewBox="0 0 16 16" fill="none" stroke="currentColor"><path d="M2.500 1.500h11v13h-11z" /><path d="M8 5v6l4-3z" fill="currentColor" /></svg>
      </button>
      <WindowButtons className="text-[#999]" />
    </div>
  );
}

function TaskPane() {
  return (
    <div className="absolute right-0 top-[29px] flex w-[22px] flex-col overflow-hidden border-l border-t border-[#888]">
      {taskPane.map((t) => (
        <button
          key={t}
          aria-label={t}
          className={`flex h-[24px] items-center border-b border-[#888] pl-[2px] ${t === 'balloon' ? 'bg-white' : 'bg-[#d0d0d0]'}`}
        >
          <Glyph size={20}>{icons[t]}</Glyph>
        </button>
      ))}
    </div>
  );
}

function Workspace() {
  return (
    <main className="bg-white bg-[linear-gradient(to_bottom,rgba(253,253,254,0)_52%,rgba(253,253,254,0.55)_58%,rgba(253,253,254,0.95)_70%,rgba(250,250,252,0.9)_100%),radial-gradient(ellipse_560px_400px_at_82%_42%,#d8dce8_0%,#dde1eb_35%,rgba(236,239,246,0.7)_70%,rgba(255,255,255,0)_100%),linear-gradient(to_bottom,#fefefe_0%,#f9fafc_30%,#e6e9f2_54%,#f3f4f9_62%,#fdfdfd_72%,#ffffff_100%)]">
      <div className="flex h-[22px] items-center">
        <CommandTabs />
        <div className="flex flex-1 items-center justify-between pl-[149px]">
          <div className="flex items-center gap-[6px] pt-[8px]">
            {headsUp.map(({ icon, label, drop }) => (
              <button key={icon} aria-label={label} className={`flex items-center gap-[6px] ${drop ? 'pr-[2px]' : ''}`}>
                <Glyph size={20}>{icons[icon]}</Glyph>
                {drop && <Caret className="text-[#999]" />}
              </button>
            ))}
          </div>
          <div className="pt-[8px]"><DocControls /></div>
        </div>
      </div>
      <div className="flex">
        <FeatureManager />
        <div className="relative flex-1">
          <Model />
          <span className="absolute left-0 top-[246px] flex h-[39px] w-[8px] items-center border border-l-0 border-[#888] bg-[#f7f7f7]">
            <span className="h-[6px] w-[6px] rounded-full border border-[#999] bg-[#ccc]" />
          </span>
          <TaskPane />
        </div>
      </div>
    </main>
  );
}

/* ---------- bottom bars ---------- */

function SheetTabs() {
  return (
    <div className="flex h-[16px] border-y border-[#777] bg-[#f7f7f7] text-[11px] leading-[14px]">
      <div className="flex w-[66px] gap-px pl-[2px]">
        {['M4 3v7M10 3v7L5 6.500z', 'M9 3v7L4 6.500z', 'M5 3v7l5-3.500z', 'M10 3v7M4 3v7l5-3.500z'].map((d) => (
          <button key={d} aria-label="Sekme gezinme" className="flex-1 bg-[#a9a9a9]">
            <svg width="14" height="13" viewBox="0 0 14 13" aria-hidden="true"><path d={d} fill="#888" stroke="#888" /></svg>
          </button>
        ))}
      </div>
      <button className="w-[57px] pl-1 text-center font-bold">Model</button>
      <button className="w-[88px] border-l border-[#888] bg-[#d0d0d0] pr-[2px] text-center">3B Görünüm</button>
      <button className="w-[114px] border-x border-[#888] bg-[#d0d0d0] pl-[10px] text-left">Hareket Etüdü 1</button>
    </div>
  );
}

function StatusBar() {
  return (
    <div className="flex h-[19px] items-center bg-[#f7f7f7] pl-px text-[11px]">
      <span>SOLIDWORKS Premium 2017 x64 Sürümü</span>
      <span className="ml-auto">Eksik Tanımlı</span>
      <span className="ml-[6px] flex h-[14px] w-[17px] justify-between border-x border-[#d0d0d0]">
        <span className="ml-[7px] w-px bg-[#d0d0d0]" />
      </span>
      <span className="relative ml-[16px] mr-[143px] flex">
        <Glyph size={14}>{icons.light}</Glyph>
        <span className="absolute bottom-[-3px] left-[12px] z-10 flex h-[34px] w-[88px] flex-col justify-center rounded-t-[3px] border border-b-0 border-[#777] bg-gradient-to-b from-white to-[#e4e5f0] pl-[4px] leading-[15px] text-[#555] shadow-[3px_2px_3px_rgba(0,0,0,0.35)]">
          <span>cws</span>
          <span className="whitespace-nowrap italic">Internet erişimi</span>
        </span>
      </span>
      <Glyph size={15}>
        <path d="M1 7l9-5 9 4v4l-6 9L1 11z" fill="#eee" stroke="#333" strokeWidth="1.500" />
        <path d="M5 8l8 5M9 5l7 4M13 13l5-6" stroke="#333" />
      </Glyph>
    </div>
  );
}

function TaskButton({ active, children, label, pad }) {
  return (
    <button
      className={`flex h-[38px] w-[159px] items-center overflow-hidden rounded-[2px] border text-[11px] text-white ${pad} ${
        active
          ? 'border-[#d5e6ef] bg-gradient-to-br from-[#d8e8f0] via-[#7aafc8] to-[#8fc3d8]'
          : 'border-[#8dbad2] bg-gradient-to-br from-[#79a9c4] via-[#3f83ab] to-[#4f9abb]'
      }`}
    >
      {children}
      <span className="whitespace-nowrap">{label}</span>
    </button>
  );
}

function Taskbar() {
  return (
    <footer className="flex h-[40px] items-center border-t border-[#1d3f63] bg-[linear-gradient(50deg,transparent_69%,rgba(170,205,230,0.4)_70%,transparent_71%),linear-gradient(to_right,#2a6a9c_0%,#23699c_45%,#1f5f9e_60%,#184a86_80%,#153f74_100%)]">
      <button aria-label="Başlat" className="ml-[8px]">
        <svg width="38" height="38" viewBox="0 0 38 38">
          <defs>
            <radialGradient id="orb" cx="50%" cy="85%" r="85%">
              <stop offset="0" stopColor="#4fc3ee" />
              <stop offset="0.500" stopColor="#1f5f96" />
              <stop offset="1" stopColor="#8db6d0" />
            </radialGradient>
          </defs>
          <circle cx="19" cy="19" r="17.500" fill="url(#orb)" stroke="#173d5e" />
          <path d="M10 12c3-2 5-2 8-1l-1 7c-3-1-5-1-8 1z" fill="#ee5a2b" />
          <path d="M19 11c3 1 6 1 9-1l-1 8c-3 2-6 2-9 1z" fill="#8cc63e" />
          <path d="M9 20c3-2 5-2 8-1l-1 8c-3-1-5-1-8 1z" fill="#3fa9e8" />
          <path d="M18 20c3 1 6 1 9-1l-1 8c-3 2-6 2-9 1z" fill="#fbc92d" />
        </svg>
      </button>
      <div className="ml-[14px] flex gap-[3px]">
        <TaskButton label="Maglev Treninin ..." pad="gap-[6px] pl-[10px]">
          <svg width="28" height="28" viewBox="0 0 28 28" className="shrink-0" aria-hidden="true">
            <circle cx="14" cy="14" r="13.500" fill="#fbc41a" />
            <path d="M14 14L2.300 7.300A13.500 13.500 0 0 1 25.700 7.300H14z" fill="#e23d30" />
            <path d="M2.300 7.300a13.500 13.500 0 0 0 11 20.200L19 18z" fill="#33a852" />
            <circle cx="14" cy="14" r="6.300" fill="#fff" />
            <circle cx="14" cy="14" r="5" fill="#4687f4" />
          </svg>
        </TaskButton>
        <TaskButton active label="SOLIDWORKS Pre..." pad="gap-[4px] pl-[7px]">
          <svg width="33" height="34" viewBox="0 0 33 34" className="shrink-0" aria-hidden="true">
            <path d="M2 7l14-6 16 4v20l-15 7L2 27z" fill="#b3141d" />
            <path d="M2 7l14-6 16 4-14 5z" fill="#e2333b" />
            <path d="M18 10v22l14-7V5z" fill="#86101a" />
            <g fontFamily="Liberation Sans, sans-serif" fontWeight="700" fill="#fff">
              <text x="3" y="21" fontSize="15">S</text>
              <text x="17" y="21" fontSize="15">W</text>
              <text x="9" y="33" fontSize="10" stroke="#111" strokeWidth="2" paintOrder="stroke">2017</text>
            </g>
          </svg>
        </TaskButton>
        <TaskButton label="hasta yatağı" pad="gap-[13px] pl-[9px]">
          <svg width="22" height="32" viewBox="0 0 22 32" className="shrink-0" aria-hidden="true">
            <path d="M1 2l10-1v27l-10-2z" fill="#f7dd7e" />
            <path d="M9 2l12 2v23l-9 4z" fill="#fbeaa5" />
            <path d="M12 8l8-3v22l-8 4z" fill="#eec95a" />
          </svg>
        </TaskButton>
      </div>
      <div className="ml-auto flex h-full items-center text-[11px] text-white">
        <span className="pb-[6px]">TR</span>
        <svg width="8" height="5" viewBox="0 0 8 5" className="ml-[16px]" aria-hidden="true"><path d="M4 0l4 5H0z" fill="#fff" /></svg>
        <svg width="16" height="16" viewBox="0 0 16 16" className="ml-[13px]" aria-hidden="true">
          <path d="M1 5h3l4-4v14l-4-4H1z" fill="#fff" />
          <path d="M10 5c2 2 2 4 0 6M12 3c3 3 3 7 0 10" stroke="#fff" fill="none" />
        </svg>
        <svg width="10" height="16" viewBox="0 0 10 16" className="ml-[12px]" aria-hidden="true">
          <path d="M1 3h8v12H1z" fill="none" stroke="#fff" strokeWidth="2" />
          <path d="M3 0h4v2H3zM3 6h4v7H3z" fill="#fff" />
        </svg>
        <div className="w-[86px] pl-2 text-center leading-[17px]">
          <p>20:08</p>
          <p>23.10.2019</p>
        </div>
        <button aria-label="Masaüstünü göster" className="h-full w-[10px] border-l border-[#6f95b8] bg-gradient-to-b from-[#4b74a0] to-[#143a68]" />
      </div>
    </footer>
  );
}

export default function App() {
  return (
    <div className="min-h-screen overflow-hidden bg-white font-['Open_Sans','Noto_Sans_CJK_SC',sans-serif] text-black">
      <TitleBar />
      <Ribbon />
      <Workspace />
      <SheetTabs />
      <StatusBar />
      <Taskbar />
    </div>
  );
}
